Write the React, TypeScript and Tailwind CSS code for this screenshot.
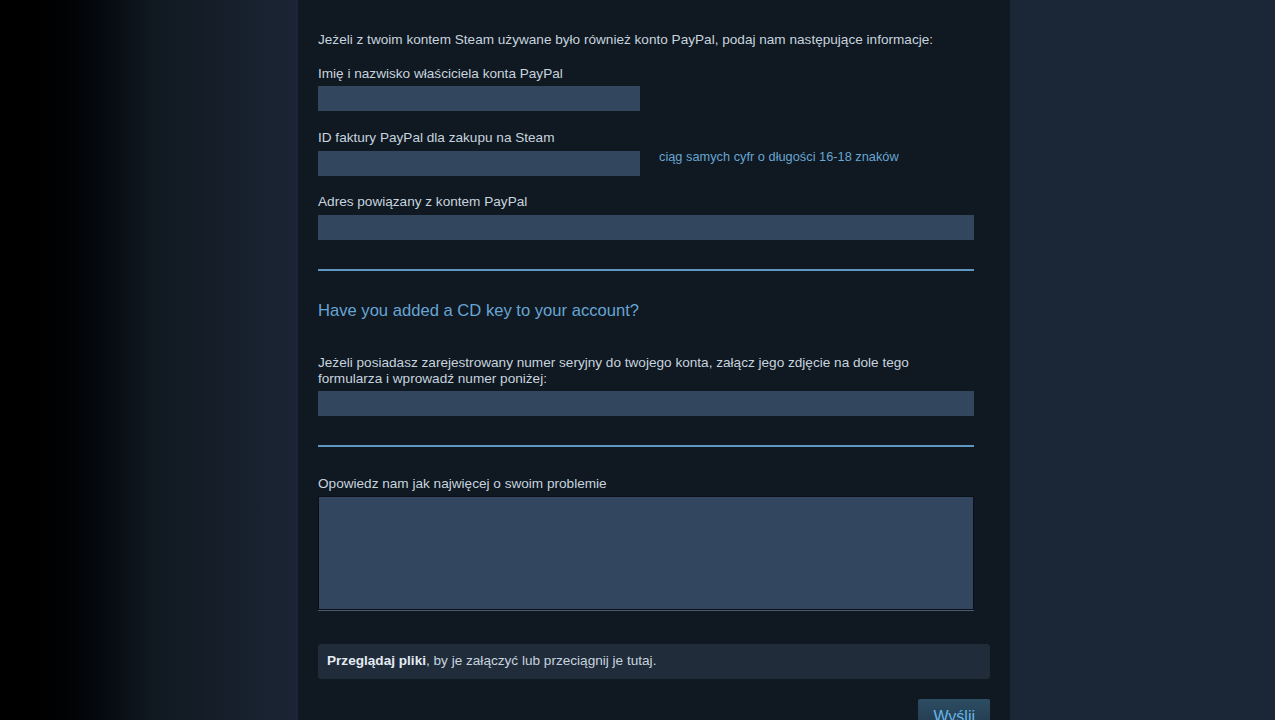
import React from "react";

const font = { fontFamily: '"Liberation Sans", Arial, sans-serif' };

function Label({ children }: { children: React.ReactNode }) {
  return <div className="text-[13.6px] leading-[16px] text-[#c6d4df]">{children}</div>;
}

function Field({ wide }: { wide?: boolean }) {
  return <div className={`h-[25px] shrink-0 bg-[#32465e] ${wide ? "w-[656px]" : "w-[322px]"}`} />;
}

function Rule() {
  return <div className="h-[2px] w-[656px] bg-[#5e97c0]" />;
}

export default function App() {
  return (
    <div className="flex h-[720px] w-full overflow-hidden bg-[#1b2636]" style={font}>
      <div className="h-full w-[298px] shrink-0 bg-gradient-to-r from-[#000000] via-[#101820] to-[#1b2535]" />
      <main className="h-full w-[712px] shrink-0 bg-[#101821] px-[20px] pt-[32px]">
        <Label>Jeżeli z twoim kontem Steam używane było również konto PayPal, podaj nam następujące informacje:</Label>

        <div className="mt-[18px] flex flex-col gap-[4px]">
          <Label>Imię i nazwisko właściciela konta PayPal</Label>
          <Field />
        </div>

        <div className="mt-[19px] flex flex-col gap-[5px]">
          <Label>ID faktury PayPal dla zakupu na Steam</Label>
          <div className="flex items-start gap-[19px]">
            <Field />
            <span className="text-[12.8px] leading-[12px] text-[#67a6d2]">ciąg samych cyfr o długości 16-18 znaków</span>
          </div>
        </div>

        <div className="mt-[18px] flex flex-col gap-[5px]">
          <Label>Adres powiązany z kontem PayPal</Label>
          <Field wide />
        </div>

        <div className="mt-[29px]">
          <Rule />
        </div>

        <h2 className="mt-[30px] text-[16.6px] font-normal leading-[20px] text-[#66a6d4]">Have you added a CD key to your account?</h2>

        <div className="mt-[34px] flex flex-col gap-[4px]">
          <Label>
            Jeżeli posiadasz zarejestrowany numer seryjny do twojego konta, załącz jego zdjęcie na dole tego
            <br />
            formularza i wprowadź numer poniżej:
          </Label>
          <Field wide />
        </div>

        <div className="mt-[29px]">
          <Rule />
        </div>

        <div className="mt-[29px] flex flex-col gap-[4px]">
          <Label>Opowiedz nam jak najwięcej o swoim problemie</Label>
          <div className="h-[114px] w-[656px] border border-[#0b1016] bg-[#32475f] shadow-[0_1px_0_#4a5a70]" />
        </div>

        <div className="mt-[34px] flex h-[35px] w-[672px] items-center rounded-[3px] bg-[#212c3b] px-[9px] text-[13.6px] text-[#c6d4df]">
          <span className="font-bold text-[#e4ecf2]">Przeglądaj pliki</span>
          <span>, by je załączyć lub przeciągnij je tutaj.</span>
        </div>

        <div className="mt-[20px] flex w-[672px] justify-end">
          <button className="h-[32px] rounded-[2px] bg-gradient-to-b from-[#2c4d63] to-[#22394b] px-[15px] pt-[4px] text-[16px] text-[#67b8ec]">
            Wyślij
          </button>
        </div>
      </main>
      <div className="h-full flex-1 bg-[#1b2637]" />
    </div>
  );
}
